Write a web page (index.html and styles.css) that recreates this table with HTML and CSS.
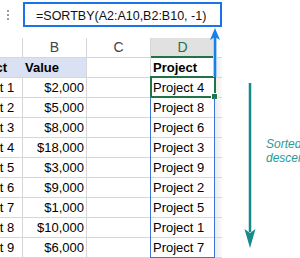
FILE: index.html
```html
<!DOCTYPE html>
<html>
<head>
<meta charset="utf-8">
<link rel="stylesheet" href="styles.css">
</head>
<body>
<div class="page">
  <div class="formula-bar">
    <div class="dots"><span></span><span></span><span></span></div>
    <div class="fx-box">=SORTBY(A2:A10,B2:B10, -1)</div>
  </div>
  <div class="sheet">
    <div class="ch"></div><div class="ch">B</div><div class="ch">C</div><div class="ch sel">D</div><div class="ch e"></div>

    <div class="c hd blue a">Project</div><div class="c hd blue">Value</div><div class="c"></div><div class="c hd">Project</div><div class="c e"></div>

    <div class="c a">Project 1</div><div class="c n">$2,000</div><div class="c"></div><div class="c">Project 4</div><div class="c e"></div>
    <div class="c a">Project 2</div><div class="c n">$5,000</div><div class="c"></div><div class="c">Project 8</div><div class="c e"></div>
    <div class="c a">Project 3</div><div class="c n">$8,000</div><div class="c"></div><div class="c">Project 6</div><div class="c e"></div>
    <div class="c a">Project 4</div><div class="c n">$18,000</div><div class="c"></div><div class="c">Project 3</div><div class="c e"></div>
    <div class="c a">Project 5</div><div class="c n">$3,000</div><div class="c"></div><div class="c">Project 9</div><div class="c e"></div>
    <div class="c a">Project 6</div><div class="c n">$9,000</div><div class="c"></div><div class="c">Project 2</div><div class="c e"></div>
    <div class="c a">Project 7</div><div class="c n">$1,000</div><div class="c"></div><div class="c">Project 5</div><div class="c e"></div>
    <div class="c a">Project 8</div><div class="c n">$10,000</div><div class="c"></div><div class="c">Project 1</div><div class="c e"></div>
    <div class="c a">Project 9</div><div class="c n">$6,000</div><div class="c"></div><div class="c">Project 7</div><div class="c e"></div>
  </div>

  <div class="active"></div>
  <div class="handle"></div>
  <div class="spill"></div>

  <svg class="blue-arrow" width="14" height="52" viewBox="0 0 14 52">
    <line x1="7" y1="10" x2="7" y2="51" stroke="#a9d0f7" stroke-width="4"/>
    <line x1="7" y1="10" x2="7" y2="51" stroke="#1a7fe6" stroke-width="2"/>
    <path d="M2 14 L7 2 L12 14 L7 11 Z" fill="#1a7fe6"/>
  </svg>

  <svg class="teal-arrow" width="20" height="172" viewBox="0 0 20 172">
    <line x1="10" y1="3" x2="10" y2="152" stroke="#178a8a" stroke-width="2.5"/>
    <path d="M4.5 149 L10 168 L15.5 149 L10 153 Z" fill="#178a8a"/>
  </svg>

  <div class="note">Sorted in<br>descending order</div>
</div>
</body>
</html>
```

FILE: styles.css
```css
html, body {
  margin: 0;
  padding: 0;
  background: #ffffff;
}

.page {
  position: relative;
  width: 300px;
  height: 258px;
  overflow: hidden;
  font-family: "Liberation Sans", Arial, sans-serif;
  color: #000;
}

.formula-bar {
  display: flex;
  align-items: flex-start;
  height: 38px;
  padding-top: 2px;
  box-sizing: border-box;
}

.dots {
  width: 23px;
  box-sizing: border-box;
  display: flex;
  flex-direction: column;
  gap: 2px;
  padding: 8px 0 0 7px;
}

.dots span {
  display: block;
  width: 2px;
  height: 2px;
  background: #9a9a9a;
}

.fx-box {
  width: 199px;
  height: 25px;
  box-sizing: border-box;
  border: 2px solid #1a73e8;
  padding: 3px 0 0 11px;
  font-size: 12.5px;
  line-height: 19px;
  white-space: nowrap;
  color: #111;
}

.sheet {
  display: grid;
  grid-template-columns: 62px 64px 64px 64px 7px;
  grid-auto-rows: 20px;
  margin-left: -39px;
  width: 261px;
}

.ch, .c {
  box-sizing: border-box;
  border-right: 1px solid #d6d6d6;
  border-bottom: 1px solid #d6d6d6;
  white-space: nowrap;
  overflow: hidden;
}

.ch {
  font-size: 14px;
  line-height: 19px;
  text-align: center;
  color: #444;
}

.ch.sel {
  background: #e1e1e1;
  color: #217346;
  border-bottom: 2px solid #217346;
  line-height: 18px;
}

.c {
  font-size: 13px;
  line-height: 18px;
  padding: 1px 2px 0 2px;
}

.c.n {
  text-align: right;
}

.c.hd {
  font-weight: bold;
}

.c.blue {
  background: #d9e1f2;
}

.c.blue.a {
  border-right-color: #d9e1f2;
}

.e {
  border-right: none;
}

.c.e {
  background: linear-gradient(to right, #ececec, #fbfbfb);
}

.active {
  position: absolute;
  left: 150px;
  top: 76px;
  width: 66px;
  height: 22px;
  box-sizing: border-box;
  border: 2px solid #217346;
}

.handle {
  position: absolute;
  left: 212px;
  top: 94px;
  width: 5px;
  height: 5px;
  background: #217346;
  box-shadow: 0 0 0 1px #ffffff;
}

.spill {
  position: absolute;
  left: 150px;
  top: 97px;
  width: 65px;
  height: 161px;
  box-sizing: border-box;
  border: 1px solid #3a76d6;
  border-top: none;
}

.blue-arrow {
  position: absolute;
  left: 208px;
  top: 26px;
}

.teal-arrow {
  position: absolute;
  left: 240px;
  top: 80px;
}

.note {
  position: absolute;
  left: 266px;
  top: 137px;
  font-size: 12px;
  line-height: 14px;
  font-style: italic;
  color: #2a9a9a;
  white-space: nowrap;
}
```
